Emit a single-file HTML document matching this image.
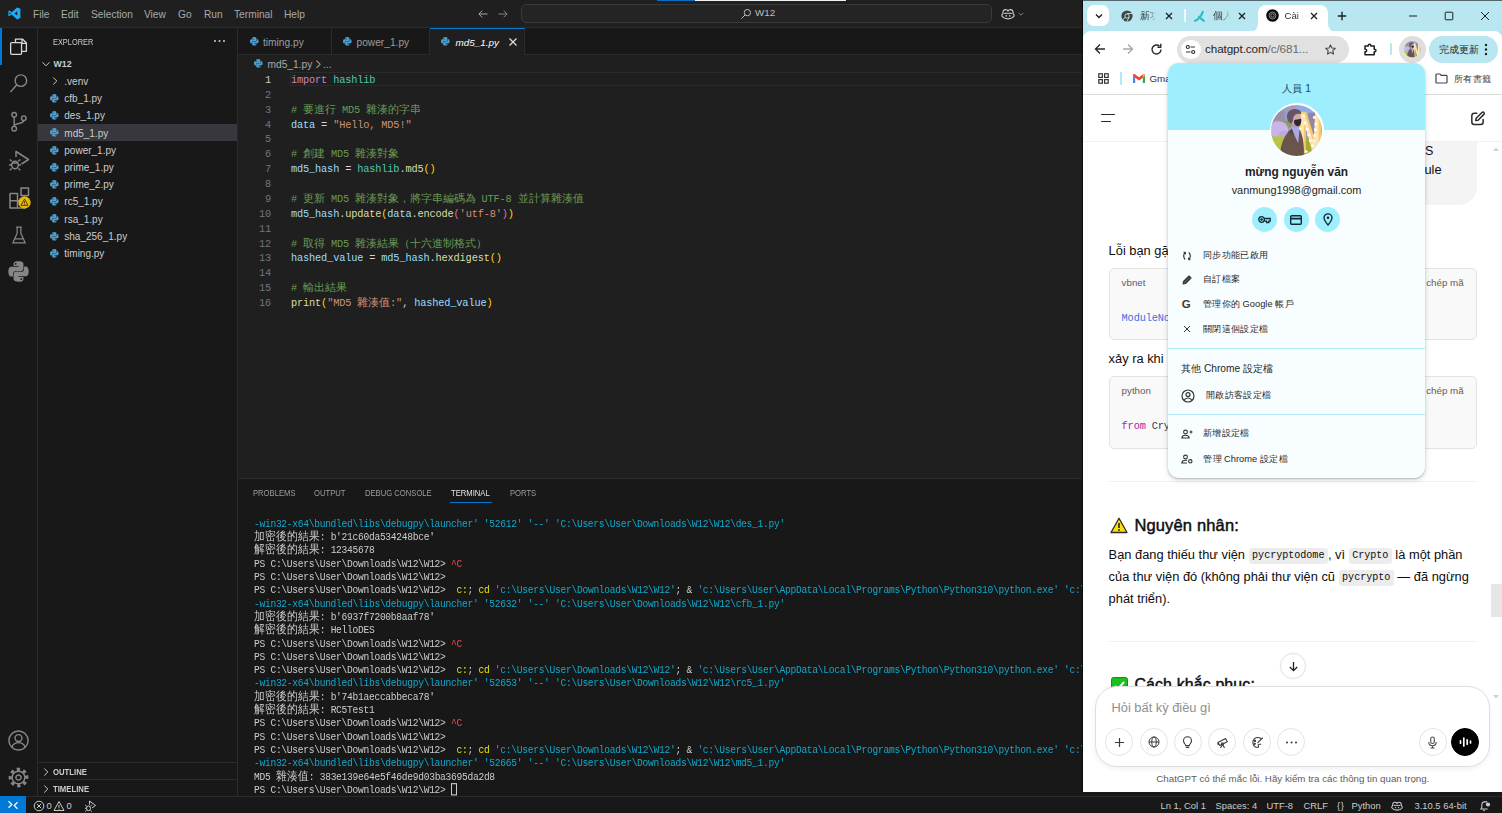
<!DOCTYPE html>
<html lang="zh-Hant">
<head>
<meta charset="utf-8">
<title>md5_1.py - W12 - Visual Studio Code</title>
<style>
*{box-sizing:border-box;margin:0;padding:0}
html,body{width:1502px;height:813px;overflow:hidden;background:#1f1f1f}
body{position:relative;font-family:"Liberation Sans",sans-serif;font-size:10.2px;color:#ccc;line-height:1}
.abs{position:absolute}
svg{display:block;overflow:visible}
/* ---------- VS Code ---------- */
#titlebar{left:0;top:0;width:1502px;height:28px;background:#1f1f1f;border-bottom:1px solid #2b2b2b}
#titlebar .m{position:absolute;top:9.7px;font-size:10.2px;color:#a9a9a9;white-space:nowrap}
#search{left:521px;top:4px;width:471px;height:19px;background:#242424;border:1px solid #3a3a3a;border-radius:5px}
#actbar{left:0;top:28px;width:38px;height:768px;background:#181818;border-right:1px solid #2b2b2b}
#sidebar{left:38px;top:28px;width:200px;height:768px;background:#181818;border-right:1px solid #2b2b2b}
.row{position:absolute;left:0;width:199px;height:17.2px;white-space:nowrap}
.row .t{position:absolute;left:26.3px;top:5.1px;font-size:10px;color:#ccc}
.row .pi{position:absolute;left:11px;top:3.8px}
.sechdr{position:absolute;left:0;width:199px;height:17.2px;border-top:1px solid #2b2b2b}
.sechdr b{position:absolute;left:15px;top:5px;font-size:8.6px;color:#ccc;transform:scaleX(.9);transform-origin:0 0}
#tabs{left:238px;top:28px;width:1264px;height:27px;background:#181818;border-bottom:1px solid #2b2b2b}
.tab{position:absolute;top:0;height:27px;border-right:1px solid #2b2b2b;white-space:nowrap}
.tab .t{position:absolute;top:10px;font-size:10.2px;color:#9d9d9d}
.tab .pi{position:absolute;top:8.4px}
#crumbs{left:238px;top:55px;width:1264px;height:17px;background:#1f1f1f;color:#a9a9a9;white-space:nowrap}
#code{left:238px;top:71.6px;width:1264px;height:407px;background:#1f1f1f}
.ln{position:absolute;left:0;width:1264px;height:14.87px;white-space:pre}
.ln i{position:absolute;left:0;width:33px;top:3.4px;text-align:right;font-style:normal;font-family:"Liberation Mono",monospace;font-size:10.3px;letter-spacing:-0.16px;color:#6e7681}
.ln code{position:absolute;left:53px;top:3.4px;font-family:"Liberation Mono",monospace;font-size:10.3px;letter-spacing:-0.16px;color:#ccc;white-space:pre}
.cj{display:inline-block;vertical-align:top;overflow:visible;white-space:nowrap;text-align:justify;text-align-last:justify;text-justify:inter-character;letter-spacing:0;font-family:"Liberation Sans",sans-serif;font-size:10.95px;line-height:11px}
.ln code.c-cm{color:#6a9955}
.ln .cj{position:relative;top:-.9px}
.cjx{display:inline-block;vertical-align:top;white-space:nowrap;overflow:visible;text-align:justify;text-align-last:justify;text-justify:inter-character;letter-spacing:0}
.c-cm{color:#6a9955}.c-kw{color:#c586c0}.c-mod{color:#4ec9b0}.c-var{color:#9cdcfe}.c-str{color:#ce9178}.c-fn{color:#dcdcaa}.c-b1{color:#ffd700}.c-b2{color:#da70d6}.c-op{color:#d4d4d4}
#panel{left:238px;top:478px;width:1264px;height:318px;background:#181818;border-top:1px solid #2b2b2b}
#panel .pt{position:absolute;top:9px;font-size:8.6px;color:#9d9d9d;white-space:nowrap;transform:scaleX(.89);transform-origin:0 0}
.tl{position:absolute;left:16px;height:13.3px;line-height:13.3px;transform:scaleY(1.12);transform-origin:0 55%;font-family:"Liberation Mono",monospace;font-size:9.6px;letter-spacing:-0.284px;color:#ccc;white-space:pre}
.t-cy{color:#11a8cd}.t-ye{color:#e5e510}.t-re{color:#f14c4c}
#status{left:0;top:796px;width:1502px;height:17px;background:#181818;border-top:1px solid #2b2b2b}
#status .s{position:absolute;top:3.7px;font-size:9.4px;color:#ccc;white-space:nowrap}
</style>
</head>
<body>

<svg width="0" height="0" style="position:absolute">
  <defs>
    <symbol id="py" viewBox="0 0 32 32"><path d="M15.9 3c-6.600 0-6.200 2.900-6.200 2.900v3h6.300v.9H7.200S3 9.300 3 16s3.700 6.400 3.700 6.400h2.200v-3.100s-.1-3.700 3.600-3.700h6.300s3.500.1 3.500-3.400V6.500S22.800 3 15.900 3zm-3.500 2a1.100 1.100 0 110 2.300 1.100 1.100 0 010-2.300z"/><path d="M16.100 29c6.600 0 6.200-2.900 6.200-2.900v-3H16v-.9h8.800S29 22.700 29 16s-3.700-6.400-3.700-6.400h-2.200v3.100s.1 3.700-3.600 3.700h-6.300s-3.500-.1-3.500 3.400v5.700S9.200 29 16.100 29zm3.500-2a1.100 1.100 0 110-2.300 1.100 1.100 0 010 2.300z"/></symbol>
    <symbol id="chev-r" viewBox="0 0 16 16"><path d="M5.700 3.300 10.400 8l-4.700 4.700" fill="none" stroke="currentColor" stroke-width="1.300"/></symbol>
    <symbol id="chev-d" viewBox="0 0 16 16"><path d="M3.300 5.700 8 10.400l4.700-4.700" fill="none" stroke="currentColor" stroke-width="1.300"/></symbol>
    <symbol id="avatar" viewBox="0 0 52 52">
      <clipPath id="avc"><circle cx="26" cy="26" r="26"/></clipPath>
      <filter id="avb" x="-10%" y="-10%" width="120%" height="120%"><feGaussianBlur stdDeviation=".55"/></filter>
      <g clip-path="url(#avc)"><g filter="url(#avb)">
        <rect x="-3" y="-3" width="58" height="58" fill="#aa9cb8"/>
        <rect x="14" y="-2" width="3" height="20" fill="#8ea0d6"/>
        <rect x="25" y="-2" width="18" height="12" fill="#93a9e2"/>
        <rect x="2" y="6" width="12" height="10" fill="#9c90a8"/>
        <rect x="38" y="8" width="16" height="26" fill="#8f86a6"/>
        <rect x="9" y="16" width="12" height="7" fill="#8f9a6c"/>
        <ellipse cx="8" cy="25" rx="9.500" ry="8.500" fill="#c9b6e8"/>
        <ellipse cx="13" cy="30" rx="5" ry="4" fill="#bda8e0"/>
        <path d="M-2 32h16v24H-2z" fill="#b9c446"/>
        <path d="M30 34h26v22H30z" fill="#a4ac38"/>
        <path d="M28.500 7h7.500l8.500 27 .5-26h6.500v32l-3 9h-6.500L35.500 22v27h-6z" fill="#f4c877"/>
        <path d="M30.500 8.500h3.500l9.500 30 1.500-29h3.500v30l-2 7h-4L33.500 17v30.500h-2.500z" fill="#fbe3b4"/>
        <g fill="#fffdf2"><circle cx="33.300" cy="11.500" r="1.500"/><circle cx="34.700" cy="18.300" r="1.500"/><circle cx="29.700" cy="24" r="1.400"/><circle cx="36.700" cy="24.800" r="1.500"/><circle cx="38.500" cy="30.500" r="1.500"/><circle cx="40" cy="36.500" r="1.500"/><circle cx="42.300" cy="41.500" r="1.500"/><circle cx="31.300" cy="41.300" r="1.400"/><circle cx="36" cy="47.500" r="1.400"/><circle cx="44.200" cy="12.800" r="1.500"/><circle cx="45.800" cy="19.300" r="1.500"/><circle cx="45.200" cy="25.300" r="1.500"/><circle cx="44.500" cy="31" r="1.500"/><circle cx="43.500" cy="36.500" r="1.400"/></g>
        <path d="M9 52c.5-10 3.500-19 8.500-24.500l6.500-5.500 5 3c3 5 5 13.500 4.500 27z" fill="#6a544c"/>
        <path d="M17.500 27.500 24 22l2 10z" fill="#5a463f"/>
        <path d="M20.500 21.800l6.800.7 1.700 3.500-1.200 13-3.600-7.500z" fill="#aba7e0"/>
        <ellipse cx="25.600" cy="14.300" rx="4.800" ry="6.900" fill="#cba9a7"/>
        <path d="M16.500 13.500c-1.200-5.500 2.800-9.500 8-9.300 4.200.2 6.700 2.300 6.300 5.300-2.300-1-4.800-.6-6.400.8-1.300 1.300-2 3.300-2 5.600l-1.300 3.200c-2.600-.6-4.100-2.600-4.600-5.600z" fill="#6b5266"/>
        <path d="M23.700 15.200 30.800 14c.4 3.600-.5 6.600-2.600 7.700-2.600.2-4.100-1.300-4.700-3.500z" fill="#2c2830"/>
      </g></g>
    </symbol>
  </defs>
</svg>

<!-- ======================= VS CODE ======================= -->
<div id="titlebar" class="abs">
  <svg class="abs" style="left:7.800px;top:7.300px" width="12.800" height="12.800" viewBox="0 0 100 100"><path fill="#23a9f2" d="M71 3 29 42 11 28 3 32v36l8 4 18-14 42 39 26-11V14zM12 60V40l11 10zm38-10 22-17v34z"/></svg>
  <span class="m" style="left:33px">File</span>
  <span class="m" style="left:61px">Edit</span>
  <span class="m" style="left:91px">Selection</span>
  <span class="m" style="left:144px">View</span>
  <span class="m" style="left:178px">Go</span>
  <span class="m" style="left:204px">Run</span>
  <span class="m" style="left:234px">Terminal</span>
  <span class="m" style="left:284px">Help</span>
  <div class="abs" style="left:657px;top:0;width:38px;height:1px;background:#0a6fc4"></div>
  <div class="abs" style="left:695px;top:0;width:151px;height:1px;background:#f2f2f2"></div>
  <svg class="abs" style="left:477px;top:8px" width="12" height="12" viewBox="0 0 16 16"><path d="M14 8H2.500M7 3.500 2.500 8 7 12.500" fill="none" stroke="#b4b4b4" stroke-width="1.200"/></svg>
  <svg class="abs" style="left:497px;top:8px" width="12" height="12" viewBox="0 0 16 16"><path d="M2 8h11.500M9 3.500 13.500 8 9 12.500" fill="none" stroke="#8a8a8a" stroke-width="1.200"/></svg>
  <div id="search" class="abs"></div>
  <svg class="abs" style="left:740px;top:7.500px" width="12" height="12" viewBox="0 0 16 16"><circle cx="9.800" cy="6.200" r="4.200" fill="none" stroke="#bdbdbd" stroke-width="1.300"/><path d="M6.800 9.200 1.800 14.200" stroke="#bdbdbd" stroke-width="1.300"/></svg>
  <span class="m" style="left:755px;top:8.400px;font-size:9.800px;color:#bdbdbd">W12</span>
  <svg class="abs" style="left:1001px;top:6.500px" width="14" height="14" viewBox="0 0 16 16"><path d="M2.200 7.500C2 4.500 3 3 5.200 3c1.500 0 2.300.6 2.800 1.500C8.500 3.600 9.300 3 10.800 3c2.200 0 3.200 1.500 3 4.500 1 .8 1.200 1.500 1.200 2.800-1.500 2.200-4 3.200-7 3.200s-5.500-1-7-3.200c0-1.300.2-2 1.200-2.800z" fill="none" stroke="#ccc" stroke-width="1.300"/><path d="M6 9.200v1.800M10 9.200v1.800" stroke="#ccc" stroke-width="1.400"/><path d="M3.500 7.200h9" stroke="#ccc" stroke-width="1.200"/></svg>
  <svg class="abs" style="left:1017px;top:9.500px" width="8" height="8" viewBox="0 0 16 16"><use href="#chev-d" color="#b0b0b0"/></svg>
</div>

<div id="actbar" class="abs">
  <div class="abs" style="left:0;top:0;width:2px;height:37px;background:#0078d4"></div>
  <!-- explorer -->
  <svg class="abs" style="left:8.300px;top:8px" width="21" height="21" viewBox="0 0 24 24" fill="none" stroke="#d7d7d7" stroke-width="1.500" stroke-linejoin="round"><path d="M8.500 7V3.500h8l4.500 4.500v9.500h-5.500"/><path d="M16 3.500V8.500h5"/><rect x="3" y="7.500" width="12.500" height="13.500" rx="1.200"/></svg>
  <!-- search -->
  <svg class="abs" style="left:7px;top:43.5px" width="23" height="23" viewBox="0 0 24 24" fill="none" stroke="#868686" stroke-width="1.500"><circle cx="14.500" cy="9" r="6"/><path d="M10.300 13.300 3.500 21"/></svg>
  <!-- scm -->
  <svg class="abs" style="left:7px;top:81.5px" width="23" height="23" viewBox="0 0 24 24" fill="none" stroke="#868686" stroke-width="1.500"><circle cx="7.500" cy="5" r="2.400"/><circle cx="7.500" cy="19.500" r="2.400"/><circle cx="17.500" cy="8.500" r="2.400"/><path d="M7.500 7.400v9.700M17.500 10.900c0 4-10 2.500-10 6.200"/></svg>
  <!-- debug -->
  <svg class="abs" style="left:7px;top:119.5px" width="24" height="24" viewBox="0 0 24 24" fill="none" stroke="#868686" stroke-width="1.500" stroke-linejoin="round"><path d="M9 9V3.500l12.500 8-7 4.500"/><ellipse cx="8" cy="17" rx="3.300" ry="3.800"/><path d="M4.700 13.200l-2-1.700M11.300 13.200l2-1.700M4.700 17H2M14 17h-2.700M4.700 20.500l-2 1.700M11.300 20.500l2 1.700M5 15h6"/></svg>
  <!-- extensions -->
  <svg class="abs" style="left:6.5px;top:157px" width="24" height="24" viewBox="0 0 24 24" fill="none" stroke="#868686" stroke-width="1.500" stroke-linejoin="round"><path d="M3 8.500h7.500V23H3zM3 15.700h14.500V23H10.500v-7.300M14 3h7.500v7.500H14z"/></svg>
  <svg class="abs" style="left:17.500px;top:168px" width="13" height="13" viewBox="0 0 16 16"><circle cx="8" cy="8" r="7.600" fill="#e6b80e"/><path d="M8 3.800 12.300 11.500H3.700z" fill="none" stroke="#3a2f00" stroke-width="1.100" stroke-linejoin="round"/><path d="M8 6.500v2.600M8 9.800v.9" stroke="#3a2f00" stroke-width="1"/></svg>
  <!-- flask -->
  <svg class="abs" style="left:9px;top:196.500px" width="20" height="20" viewBox="0 0 24 24" fill="none" stroke="#868686" stroke-width="1.500" stroke-linejoin="round"><path d="M8.500 2.500h7M9.800 2.500v7.500L4.500 21.500h15L14.200 10V2.500M7 16.500h10"/></svg>
  <!-- python -->
  <svg class="abs" style="left:6px;top:230.5px" width="25" height="25" viewBox="0 0 32 32" fill="#868686"><use href="#py"/></svg>
  <!-- account -->
  <svg class="abs" style="left:7px;top:700.5px" width="23" height="23" viewBox="0 0 24 24" fill="none" stroke="#868686" stroke-width="1.500"><circle cx="12" cy="12" r="10"/><circle cx="12" cy="9.500" r="3.600"/><path d="M5 19c1.300-3.200 3.800-4.800 7-4.800s5.700 1.600 7 4.800"/></svg>
  <!-- gear -->
  <svg class="abs" style="left:7px;top:737.5px" width="23" height="23" viewBox="-12 -12 24 24" fill="none" stroke="#868686"><circle r="8.600" stroke-width="3.400" stroke-dasharray="3.380 3.375" transform="rotate(-14)"/><circle r="6.600" stroke-width="1.500"/><circle r="2.700" stroke-width="1.500"/></svg>
</div>

<div id="sidebar" class="abs">
  <span class="abs" style="left:15px;top:9.800px;font-size:8.600px;color:#ccc;transform:scaleX(.86);transform-origin:0 0">EXPLORER</span>
  <svg class="abs" style="left:175px;top:11px" width="13" height="4" viewBox="0 0 13 4"><circle cx="2" cy="2" r="1" fill="#ccc"/><circle cx="6.500" cy="2" r="1" fill="#ccc"/><circle cx="11" cy="2" r="1" fill="#ccc"/></svg>
  <div class="row" style="top:26.800px"><svg class="abs" style="left:2px;top:3px" width="12" height="12"><use href="#chev-d" color="#ccc"/></svg><b class="abs" style="left:15.500px;top:4.900px;font-size:8.800px;color:#ccc">W12</b></div>
  <div class="row" style="top:44px"><svg class="abs" style="left:11px;top:3px" width="12" height="12"><use href="#chev-r" color="#ccc"/></svg><span class="t">.venv</span></div>
  <div class="row" style="top:61.200px"><svg class="pi" width="10.600" height="10.600" fill="#4f9fcf"><use href="#py"/></svg><span class="t">cfb_1.py</span></div>
  <div class="row" style="top:78.400px"><svg class="pi" width="10.600" height="10.600" fill="#4f9fcf"><use href="#py"/></svg><span class="t">des_1.py</span></div>
  <div class="row" style="top:95.600px;background:#37373d"><svg class="pi" width="10.600" height="10.600" fill="#4f9fcf"><use href="#py"/></svg><span class="t">md5_1.py</span></div>
  <div class="row" style="top:112.800px"><svg class="pi" width="10.600" height="10.600" fill="#4f9fcf"><use href="#py"/></svg><span class="t">power_1.py</span></div>
  <div class="row" style="top:130px"><svg class="pi" width="10.600" height="10.600" fill="#4f9fcf"><use href="#py"/></svg><span class="t">prime_1.py</span></div>
  <div class="row" style="top:147.200px"><svg class="pi" width="10.600" height="10.600" fill="#4f9fcf"><use href="#py"/></svg><span class="t">prime_2.py</span></div>
  <div class="row" style="top:164.400px"><svg class="pi" width="10.600" height="10.600" fill="#4f9fcf"><use href="#py"/></svg><span class="t">rc5_1.py</span></div>
  <div class="row" style="top:181.600px"><svg class="pi" width="10.600" height="10.600" fill="#4f9fcf"><use href="#py"/></svg><span class="t">rsa_1.py</span></div>
  <div class="row" style="top:198.800px"><svg class="pi" width="10.600" height="10.600" fill="#4f9fcf"><use href="#py"/></svg><span class="t">sha_256_1.py</span></div>
  <div class="row" style="top:216px"><svg class="pi" width="10.600" height="10.600" fill="#4f9fcf"><use href="#py"/></svg><span class="t">timing.py</span></div>
  <div class="sechdr" style="top:734px"><svg class="abs" style="left:2px;top:2.500px" width="12" height="12"><use href="#chev-r" color="#ccc"/></svg><b>OUTLINE</b></div>
  <div class="sechdr" style="top:751.200px"><svg class="abs" style="left:2px;top:2.500px" width="12" height="12"><use href="#chev-r" color="#ccc"/></svg><b>TIMELINE</b></div>
</div>

<div id="tabs" class="abs">
  <div class="tab" style="left:0;width:93.500px"><svg class="pi" style="left:11px" width="10.600" height="10.600" fill="#4f9fcf"><use href="#py"/></svg><span class="t" style="left:25px">timing.py</span></div>
  <div class="tab" style="left:93.500px;width:98.500px"><svg class="pi" style="left:10.500px" width="10.600" height="10.600" fill="#4f9fcf"><use href="#py"/></svg><span class="t" style="left:25px">power_1.py</span></div>
  <div class="tab" style="left:192px;width:95px;height:28px;background:#1f1f1f;border-top:1px solid #0078d4"><svg class="pi" style="left:10px;top:7.400px" width="10.600" height="10.600" fill="#4f9fcf"><use href="#py"/></svg><span class="t" style="left:25.500px;top:9px;color:#fff;font-style:italic;font-size:9.900px">md5_1.py</span><svg class="abs" style="left:78px;top:8px" width="10" height="10" viewBox="0 0 10 10"><path d="M1.500 1.500l7 7M8.500 1.500l-7 7" stroke="#e0e0e0" stroke-width="1.200"/></svg></div>
</div>

<div id="crumbs" class="abs">
  <svg class="abs" style="left:15px;top:2.800px" width="10.600" height="10.600" fill="#4f9fcf"><use href="#py"/></svg>
  <span class="abs" style="left:29.500px;top:4.600px;font-size:10.200px">md5_1.py</span>
  <svg class="abs" style="left:73.500px;top:2.500px" width="12.500" height="12.500"><use href="#chev-r" color="#a9a9a9"/></svg>
  <span class="abs" style="left:85px;top:4.600px;font-size:10.200px">...</span>
</div>

<div id="code" class="abs">
  <div class="abs" style="left:52px;top:0;width:1212px;height:14.870px;border:1px solid #2a2a2a"></div>
  <div class="ln" style="top:0"><i style="color:#ccc">1</i><code><span class="c-kw">import</span> <span class="c-mod">hashlib</span></code></div>
  <div class="ln" style="top:14.870px"><i>2</i></div>
  <div class="ln" style="top:29.740px"><i>3</i><code class="c-cm"># <span class="cj" style="width:32.850px">要進行</span> MD5 <span class="cj" style="width:54.750px">雜湊的字串</span></code></div>
  <div class="ln" style="top:44.610px"><i>4</i><code><span class="c-var">data</span> <span class="c-op">=</span> <span class="c-str">"Hello, MD5!"</span></code></div>
  <div class="ln" style="top:59.480px"><i>5</i></div>
  <div class="ln" style="top:74.350px"><i>6</i><code class="c-cm"># <span class="cj" style="width:21.900px">創建</span> MD5 <span class="cj" style="width:43.800px">雜湊對象</span></code></div>
  <div class="ln" style="top:89.220px"><i>7</i><code><span class="c-var">md5_hash</span> <span class="c-op">=</span> <span class="c-mod">hashlib</span><span class="c-op">.</span><span class="c-fn">md5</span><span class="c-b1">()</span></code></div>
  <div class="ln" style="top:104.090px"><i>8</i></div>
  <div class="ln" style="top:118.960px"><i>9</i><code class="c-cm"># <span class="cj" style="width:21.900px">更新</span> MD5 <span class="cj" style="width:120.450px">雜湊對象，將字串編碼為</span> UTF-8 <span class="cj" style="width:65.700px">並計算雜湊值</span></code></div>
  <div class="ln" style="top:133.830px"><i>10</i><code><span class="c-var">md5_hash</span><span class="c-op">.</span><span class="c-fn">update</span><span class="c-b1">(</span><span class="c-var">data</span><span class="c-op">.</span><span class="c-fn">encode</span><span class="c-b2">(</span><span class="c-str">'utf-8'</span><span class="c-b2">)</span><span class="c-b1">)</span></code></div>
  <div class="ln" style="top:148.700px"><i>11</i></div>
  <div class="ln" style="top:163.570px"><i>12</i><code class="c-cm"># <span class="cj" style="width:21.900px">取得</span> MD5 <span class="cj" style="width:131.400px">雜湊結果（十六進制格式）</span></code></div>
  <div class="ln" style="top:178.440px"><i>13</i><code><span class="c-var">hashed_value</span> <span class="c-op">=</span> <span class="c-var">md5_hash</span><span class="c-op">.</span><span class="c-fn">hexdigest</span><span class="c-b1">()</span></code></div>
  <div class="ln" style="top:193.310px"><i>14</i></div>
  <div class="ln" style="top:208.180px"><i>15</i><code class="c-cm"># <span class="cj" style="width:43.800px">輸出結果</span></code></div>
  <div class="ln" style="top:223.050px"><i>16</i><code><span class="c-fn">print</span><span class="c-b1">(</span><span class="c-str">"MD5 <span class="cj" style="width:32.850px">雜湊值</span>:"</span><span class="c-op">,</span> <span class="c-var">hashed_value</span><span class="c-b1">)</span></code></div>
</div>

<div id="panel" class="abs">
<div class="abs" style="left:0;top:1px;width:1264px;height:316px">
  <span class="pt" style="left:15px">PROBLEMS</span>
  <span class="pt" style="left:76px">OUTPUT</span>
  <span class="pt" style="left:127px">DEBUG CONSOLE</span>
  <span class="pt" style="left:213px;color:#e7e7e7">TERMINAL</span>
  <div class="abs" style="left:212px;top:21.500px;width:42px;height:1px;background:#0078d4"></div>
  <span class="pt" style="left:272px">PORTS</span>

  <div class="tl t-cy" style="top:37.85px">-win32-x64\bundled\libs\debugpy\launcher' '52612' '--' 'C:\Users\User\Downloads\W12\W12\des_1.py'</div>
  <div class="tl" style="top:51.15px"><span class="cj" style="width:65.700px">加密後的結果</span>: b'21c60da534248bce'</div>
  <div class="tl" style="top:64.45px"><span class="cj" style="width:65.700px">解密後的結果</span>: 12345678</div>
  <div class="tl" style="top:77.75px">PS C:\Users\User\Downloads\W12\W12> <span class="t-re">^C</span></div>
  <div class="tl" style="top:91.05px">PS C:\Users\User\Downloads\W12\W12></div>
  <div class="tl" style="top:104.35px">PS C:\Users\User\Downloads\W12\W12>  <span class="t-ye">c:</span>; <span class="t-ye">cd</span> <span class="t-cy">'c:\Users\User\Downloads\W12\W12'</span>; &amp; <span class="t-cy">'c:\Users\User\AppData\Local\Programs\Python\Python310\python.exe' 'c:\Users</span></div>
  <div class="tl t-cy" style="top:117.65px">-win32-x64\bundled\libs\debugpy\launcher' '52632' '--' 'C:\Users\User\Downloads\W12\W12\cfb_1.py'</div>
  <div class="tl" style="top:130.95px"><span class="cj" style="width:65.700px">加密後的結果</span>: b'6937f7200b8aaf78'</div>
  <div class="tl" style="top:144.25px"><span class="cj" style="width:65.700px">解密後的結果</span>: HelloDES</div>
  <div class="tl" style="top:157.55px">PS C:\Users\User\Downloads\W12\W12> <span class="t-re">^C</span></div>
  <div class="tl" style="top:170.85px">PS C:\Users\User\Downloads\W12\W12></div>
  <div class="tl" style="top:184.15px">PS C:\Users\User\Downloads\W12\W12>  <span class="t-ye">c:</span>; <span class="t-ye">cd</span> <span class="t-cy">'c:\Users\User\Downloads\W12\W12'</span>; &amp; <span class="t-cy">'c:\Users\User\AppData\Local\Programs\Python\Python310\python.exe' 'c:\Users</span></div>
  <div class="tl t-cy" style="top:197.45px">-win32-x64\bundled\libs\debugpy\launcher' '52653' '--' 'C:\Users\User\Downloads\W12\W12\rc5_1.py'</div>
  <div class="tl" style="top:210.75px"><span class="cj" style="width:65.700px">加密後的結果</span>: b'74b1aeccabbeca78'</div>
  <div class="tl" style="top:224.05px"><span class="cj" style="width:65.700px">解密後的結果</span>: RC5Test1</div>
  <div class="tl" style="top:237.35px">PS C:\Users\User\Downloads\W12\W12> <span class="t-re">^C</span></div>
  <div class="tl" style="top:250.65px">PS C:\Users\User\Downloads\W12\W12></div>
  <div class="tl" style="top:263.95px">PS C:\Users\User\Downloads\W12\W12>  <span class="t-ye">c:</span>; <span class="t-ye">cd</span> <span class="t-cy">'c:\Users\User\Downloads\W12\W12'</span>; &amp; <span class="t-cy">'c:\Users\User\AppData\Local\Programs\Python\Python310\python.exe' 'c:\Users</span></div>
  <div class="tl t-cy" style="top:277.25px">-win32-x64\bundled\libs\debugpy\launcher' '52665' '--' 'C:\Users\User\Downloads\W12\W12\md5_1.py'</div>
  <div class="tl" style="top:290.55px">MD5 <span class="cj" style="width:32.850px">雜湊值</span>: 383e139e64e5f46de9d03ba3695da2d8</div>
  <div class="tl" style="top:303.85px">PS C:\Users\User\Downloads\W12\W12> <span style="display:inline-block;vertical-align:top;width:5.500px;height:11px;margin-top:.3px;border:1px solid #ccc"></span></div>
</div>
</div>

<div id="status" class="abs">
  <div class="abs" style="left:0;top:-1px;width:26px;height:18px;background:#0078d4"></div>
  <svg class="abs" style="left:7px;top:3px" width="12" height="11" viewBox="0 0 12 11"><path d="M1.500 1.800 4.800 5 1.500 8.200M10.500 2.800 7.200 6l3.300 3.200" fill="none" stroke="#fff" stroke-width="1.200" transform="translate(0,-.5)"/></svg>
  <svg class="abs" style="left:33px;top:2.500px" width="12" height="12" viewBox="0 0 12 12"><circle cx="6" cy="6" r="4.800" fill="none" stroke="#ccc"/><path d="M4 4l4 4M8 4l-4 4" stroke="#ccc"/></svg>
  <span class="s" style="left:46.500px">0</span>
  <svg class="abs" style="left:53px;top:2.500px" width="12" height="12" viewBox="0 0 12 12"><path d="M6 1.500 11 10.500H1z" fill="none" stroke="#ccc" stroke-linejoin="round"/><path d="M6 5v2.800M6 8.600v.9" stroke="#ccc"/></svg>
  <span class="s" style="left:66.500px">0</span>
  <svg class="abs" style="left:84px;top:2px" width="13" height="13" viewBox="0 0 13 13" fill="none" stroke="#ccc" stroke-linejoin="round"><path d="M5.500 5.500V2l6 4.500L8 9"/><ellipse cx="4.500" cy="9.300" rx="2" ry="2.400"/><path d="M2.500 7l-1.300-1M6.500 7l1.300-1M2.500 9.300H1M2.500 11.500l-1.300 1M6.500 11.500l1.300 1"/></svg>

  <span class="s" style="left:1160.500px">Ln 1, Col 1</span>
  <span class="s" style="left:1215.500px">Spaces: 4</span>
  <span class="s" style="left:1266.500px">UTF-8</span>
  <span class="s" style="left:1303.500px">CRLF</span>
  <span class="s" style="left:1337px;letter-spacing:.5px">{}</span>
  <span class="s" style="left:1351.500px">Python</span>
  <svg class="abs" style="left:1391px;top:2.500px" width="12" height="12" viewBox="0 0 16 16"><path d="M2.200 7.500C2 4.500 3 3 5.200 3c1.500 0 2.300.6 2.800 1.500C8.500 3.600 9.300 3 10.800 3c2.200 0 3.200 1.500 3 4.500 1 .8 1.200 1.500 1.200 2.800-1.500 2.200-4 3.200-7 3.200s-5.500-1-7-3.200c0-1.300.2-2 1.200-2.800z" fill="none" stroke="#ccc" stroke-width="1.400"/><path d="M6 9.200v1.800M10 9.200v1.800" stroke="#ccc" stroke-width="1.500"/><path d="M3.500 7.200h9" stroke="#ccc" stroke-width="1.300"/></svg>
  <span class="s" style="left:1414.500px">3.10.5 64-bit</span>
  <svg class="abs" style="left:1479px;top:2.500px" width="12" height="12" viewBox="0 0 16 16" fill="none" stroke="#ccc" stroke-width="1.400"><path d="M11 2.500H7C5 2.500 3.800 4 3.800 6v3.500L2.500 12h9"/><path d="M6 12.500c0 1.200.8 1.800 1.800 1.800"/><circle cx="12" cy="6" r="2.800" fill="#ccc" stroke="none"/></svg>
</div>

<!-- ======================= CHROME ======================= -->
<style>
#chrome{left:1083px;top:0;width:419px;height:792px;background:#fff;overflow:hidden;color:#1f1f1f}
#chrome .x{position:absolute}
.ctab{position:absolute;top:11px;font-size:9.600px;color:#333;white-space:nowrap;overflow:hidden}
.pg{position:absolute;white-space:nowrap;color:#0d0d0d;font-size:12.850px}
.ic{display:inline;position:relative;top:-.3px;background:#ececec;border-radius:3px;font-family:"Liberation Mono",monospace;font-size:10.100px;letter-spacing:-0.030px;padding:2.450px 3.500px 2.450px;color:#0d0d0d}
.cb{position:absolute;left:25.600px;width:368px;height:72.800px;background:#f9f9f9;border:1px solid #e3e3e3;border-radius:5px}
.cb .l{position:absolute;left:12px;top:9.300px;font-size:9.750px;color:#5d5d5d}
.cb .r{position:absolute;right:12px;top:9.300px;font-size:9.750px;color:#5d5d5d}
.cb .c{position:absolute;left:12px;top:44.300px;font-family:"Liberation Mono",monospace;font-size:10.300px;letter-spacing:-0.160px;white-space:pre;color:#383a42}
.hd{font-weight:normal;-webkit-text-stroke:.45px #0d0d0d;letter-spacing:.15px}
.rb{position:absolute;width:28px;height:28px;margin:-.5px 0 0 -.5px;border-radius:50%;border:1px solid #e3e3e3;background:#fff}
</style>
<div class="abs" style="left:1082px;top:0;width:1px;height:792px;background:#0a0a0a"></div>
<div id="chrome" class="abs">
  <!-- frame / tab strip -->
  <div class="x" style="left:0;top:0;width:419px;height:46px;background:#b8e7f2;border-top:1px solid #55666c"></div>
  <div class="x" style="left:4.300px;top:4.700px;width:21.800px;height:21.600px;border-radius:7px;background:#fff"></div>
  <svg class="x" style="left:10.500px;top:11px" width="10" height="10" viewBox="0 0 10 10"><path d="M2 3.500 5 6.500 8 3.500" fill="none" stroke="#1f1f1f" stroke-width="1.400"/></svg>
  <!-- tab 1 -->
  <svg class="x" style="left:38px;top:9.500px" width="12" height="12" viewBox="-6 -6 12 12"><circle r="5.600" fill="#444"/><circle r="2.500" fill="#b8e7f2"/><circle r="1.700" fill="#444"/><path d="M0-2.500H5.200M-2.200 1.300-4.800 5.200M2.200 1.300-.3 5.600" stroke="#b8e7f2" stroke-width=".9"/></svg>
  <span class="ctab" style="left:56.500px;width:16px;-webkit-mask-image:linear-gradient(90deg,#000 50%,transparent)">新功能</span>
  <svg class="x" style="left:82px;top:11.500px" width="8" height="8" viewBox="0 0 8 8"><path d="M1 1l6 6M7 1 1 7" stroke="#1f1f1f" stroke-width="1.300"/></svg>
  <div class="x" style="left:101px;top:9px;width:1.500px;height:13px;background:#eefafd"></div>
  <!-- tab 2 -->
  <svg class="x" style="left:110px;top:9.500px" width="13" height="13" viewBox="0 0 13 13" fill="none" stroke="#2cc0c8" stroke-width="2.200" stroke-linecap="round"><path d="M2 10.800C5 10 8.500 6 9.800 1.800"/><path d="M6 6.800 10.800 10.800"/></svg>
  <span class="ctab" style="left:129.500px;width:17px;-webkit-mask-image:linear-gradient(90deg,#000 55%,transparent)">個人資</span>
  <svg class="x" style="left:155px;top:11.500px" width="8" height="8" viewBox="0 0 8 8"><path d="M1 1l6 6M7 1 1 7" stroke="#1f1f1f" stroke-width="1.300"/></svg>
  <!-- active tab -->
  <div class="x" style="left:175px;top:5px;width:70px;height:27px;background:#fff;border-radius:8px 8px 0 0"></div>
  <svg class="x" style="left:167px;top:24px" width="8" height="8" viewBox="0 0 8 8"><path d="M8 0v8H0A8 8 0 0 0 8 0z" fill="#fff"/></svg>
  <svg class="x" style="left:245px;top:24px" width="8" height="8" viewBox="0 0 8 8"><path d="M0 0v8h8A8 8 0 0 1 0 0z" fill="#fff"/></svg>
  <svg class="x" style="left:182.500px;top:9px" width="13" height="13" viewBox="-6.500 -6.500 13 13"><circle r="6.300" fill="#0a0a0a"/><circle r="3.400" fill="none" stroke="#bbb" stroke-width=".7"/><circle r="1.700" fill="none" stroke="#bbb" stroke-width=".7"/></svg>
  <span class="ctab" style="left:201.500px;width:18px;-webkit-mask-image:linear-gradient(90deg,#000 70%,transparent)">Cài đặt</span>
  <svg class="x" style="left:227px;top:11.500px" width="8" height="8" viewBox="0 0 8 8"><path d="M1 1l6 6M7 1 1 7" stroke="#1f1f1f" stroke-width="1.300"/></svg>
  <svg class="x" style="left:254px;top:11px" width="10" height="10" viewBox="0 0 10 10"><path d="M5 .8v8.400M.8 5h8.400" stroke="#1f1f1f" stroke-width="1.400"/></svg>
  <!-- window controls -->
  <svg class="x" style="left:325px;top:11px" width="10" height="10" viewBox="0 0 10 10"><path d="M1 5h8" stroke="#1f1f1f" stroke-width="1"/></svg>
  <svg class="x" style="left:361px;top:11px" width="10" height="10" viewBox="0 0 10 10"><rect x="1.200" y="1.200" width="7.600" height="7.600" rx=".8" fill="none" stroke="#1f1f1f" stroke-width="1"/></svg>
  <svg class="x" style="left:397px;top:11px" width="10" height="10" viewBox="0 0 10 10"><path d="M1 1l8 8M9 1 1 9" stroke="#1f1f1f" stroke-width="1"/></svg>

  <!-- toolbar -->
  <div class="x" style="left:0;top:31px;width:419px;height:64px;background:#fff;border-radius:8px 8px 0 0;border-bottom:1px solid #dadada"></div>
  <svg class="x" style="left:11px;top:43px" width="12" height="12" viewBox="0 0 12 12" fill="none" stroke="#2a2a2a" stroke-width="1.400"><path d="M11 6H1.800M6 1.500 1.500 6 6 10.500"/></svg>
  <svg class="x" style="left:39px;top:43px" width="12" height="12" viewBox="0 0 12 12" fill="none" stroke="#a6a6a6" stroke-width="1.300"><path d="M1 6h9.200M6 1.500 10.500 6 6 10.500"/></svg>
  <svg class="x" style="left:67px;top:42.500px" width="13" height="13" viewBox="0 0 13 13" fill="none" stroke="#2a2a2a" stroke-width="1.400"><path d="M11 6.500A4.500 4.500 0 1 1 9.500 3.100"/><path d="M10.800.8v3.400H7.400" stroke-linejoin="round"/></svg>
  <div class="x" style="left:94px;top:36px;width:172px;height:26.500px;border-radius:13.250px;background:#e1e1e1"></div>
  <div class="x" style="left:98px;top:39.500px;width:19.500px;height:19.500px;border-radius:50%;background:#fff"></div>
  <svg class="x" style="left:102px;top:44px" width="11" height="11" viewBox="0 0 11 11" fill="none" stroke="#333" stroke-width="1.200"><circle cx="2.800" cy="3" r="1.500"/><path d="M5.500 3H10M1 8h4.500"/><circle cx="8.200" cy="8" r="1.500"/></svg>
  <span class="x" style="left:122px;top:42.500px;font-size:11.700px;white-space:nowrap;color:#1f1f1f;letter-spacing:-.1px">chatgpt.com<span style="color:#6a6a6a">/c/681...</span></span>
  <svg class="x" style="left:240.500px;top:42.500px" width="13" height="13" viewBox="0 0 24 24"><path d="M12 3.500l2.700 5.600 6.100.8-4.500 4.200 1.100 6.100L12 17.300l-5.400 2.900 1.100-6.100L3.200 9.900l6.100-.8z" fill="none" stroke="#444" stroke-width="1.900" stroke-linejoin="round"/></svg>
  <svg class="x" style="left:280px;top:42px" width="14" height="14" viewBox="0 0 14 14"><path d="M2 4h3.200c-.5-2.300 3.100-2.300 2.600 0H11.200v3.200c2.300-.5 2.300 3.100 0 2.600V12.700H2V9.800c2.200.4 2.200-3 0-2.600z" fill="none" stroke="#1f1f1f" stroke-width="1.500" stroke-linejoin="round"/></svg>
  <div class="x" style="left:306.500px;top:43px;width:2px;height:12px;border-radius:1px;background:#b8e7f2"></div>
  <div class="x" style="left:316px;top:36px;width:26.500px;height:26.500px;border-radius:50%;background:#dedede"></div>
  <svg class="x" style="left:321px;top:41px" width="16.500" height="16.500" viewBox="0 0 52 52"><use href="#avatar"/></svg>
  <div class="x" style="left:346px;top:36px;width:69px;height:26.500px;border-radius:13.250px;background:#b8e7f2"></div>
  <span class="x" style="left:355.500px;top:44.500px;font-size:9.600px;white-space:nowrap;color:#1f1f1f"><span class="cjx" style="width:38.400px">完成更新</span></span>
  <svg class="x" style="left:401px;top:42.500px" width="4" height="13" viewBox="0 0 4 13"><circle cx="2" cy="2" r="1.200" fill="#1f1f1f"/><circle cx="2" cy="6.500" r="1.200" fill="#1f1f1f"/><circle cx="2" cy="11" r="1.200" fill="#1f1f1f"/></svg>

  <!-- bookmarks bar -->
  <svg class="x" style="left:14.500px;top:73px" width="11" height="11" viewBox="0 0 11 11" fill="none" stroke="#333" stroke-width="1.200"><rect x=".8" y=".8" width="3.600" height="3.600"/><rect x="6.600" y=".8" width="3.600" height="3.600"/><rect x=".8" y="6.600" width="3.600" height="3.600"/><rect x="6.600" y="6.600" width="3.600" height="3.600"/></svg>
  <div class="x" style="left:37px;top:72px;width:1.500px;height:13px;background:#b8e7f2"></div>
  <svg class="x" style="left:49.500px;top:74px" width="12" height="9" viewBox="0 0 12 9"><path d="M0 1.200V9h2.200V3.800z" fill="#4285f4"/><path d="M12 1.200V9H9.800V3.800z" fill="#34a853"/><path d="M0 1.200C0-.2 1.300-.3 2.200.4L6 3.300 9.800.4c.9-.7 2.200-.6 2.200.8L9.800 3.800 6 6.600 2.200 3.800z" fill="#ea4335"/><path d="M9.800 3.800 12 1.200c0-1.400-1.300-1.500-2.200-.8z" fill="#fbbc04"/></svg>
  <span class="x" style="left:66.500px;top:73.500px;font-size:9.800px;color:#333;white-space:nowrap">Gmail</span>
  <svg class="x" style="left:352px;top:73px" width="13" height="11" viewBox="0 0 13 11"><path d="M1 1.800c0-.5.3-.8.800-.8h3.200l1.200 1.400h5c.5 0 .8.300.8.800v6c0 .5-.3.800-.8.800H1.800c-.5 0-.8-.3-.8-.8z" fill="none" stroke="#444" stroke-width="1.200"/></svg>
  <span class="x" style="left:371px;top:74px;font-size:9.400px;color:#333;white-space:nowrap"><span class="cjx" style="width:37.200px">所有書籤</span></span>

  <!-- page -->
  <div class="x" style="left:0;top:95px;width:419px;height:47px;background:#fff;border-bottom:1px solid #f1f1f1"></div>
  <div class="x" style="left:17.500px;top:113.700px;width:14.500px;height:1.600px;background:#2a2a2a;border-radius:1px"></div>
  <div class="x" style="left:17.500px;top:120.700px;width:10.500px;height:1.600px;background:#2a2a2a;border-radius:1px"></div>
  <svg class="x" style="left:386px;top:110px" width="17" height="17" viewBox="0 0 24 24" fill="none" stroke="#2a2a2a" stroke-width="2.100" stroke-linecap="round" stroke-linejoin="round"><path d="M11 4.500H7.500c-2.200 0-3.500 1.300-3.500 3.500v9c0 2.200 1.300 3.500 3.500 3.500h9c2.200 0 3.500-1.300 3.500-3.500V13.500"/><path d="M9.500 14.800l.6-3.100 8.200-8.200c.8-.8 2-.8 2.700 0 .8.700.8 1.900 0 2.700l-8.200 8.200z"/></svg>
  <div class="x" style="left:250px;top:142px;width:143.500px;height:63px;background:#f4f4f4;border-radius:0 0 18px 0"></div>
  <span class="pg" style="left:342px;top:144.500px;font-size:12.500px">S</span>
  <span class="pg" style="left:341.500px;top:163.500px;font-size:12.800px">ule</span>

  <span class="pg" id="t-loi" style="left:25.600px;top:244.800px">Lỗi bạn gặp là:</span>
  <div class="cb" style="top:267.500px"><span class="l">vbnet</span><span class="r">Sao chép mã</span><span class="c" style="color:#3b6fe0">ModuleNotFoundError</span></div>
  <span class="pg" id="t-xay" style="left:25.600px;top:352.700px">xảy ra khi</span>
  <div class="cb" style="top:376px"><span class="l">python</span><span class="r">Sao chép mã</span><span class="c"><span style="color:#a626a4">from</span> Crypto.Cipher</span></div>
  <div class="x" style="left:25.600px;top:480.500px;width:368px;height:1px;background:#f0f0f0"></div>

  <svg class="x" style="left:27px;top:516.500px" width="18" height="17" viewBox="0 0 18 17"><path d="M9 1.200 17 15.500H1z" fill="#ffdd0c" stroke="#2b2b2b" stroke-width="1.300" stroke-linejoin="round"/><path d="M9 6v5" stroke="#2b2b2b" stroke-width="1.700"/><circle cx="9" cy="13.100" r="1" fill="#2b2b2b"/></svg>
  <b class="pg hd" id="t-h1" style="left:51.400px;top:516.600px;font-size:16.500px">Nguyên nhân:</b>
  <span class="pg" id="t-p1" style="left:25.600px;top:548.700px">Bạn đang thiếu thư viện <span class="ic">pycryptodome</span>, vì <span class="ic">Crypto</span> là một phần</span>
  <span class="pg" id="t-p2" style="left:25.600px;top:570.600px">của thư viện đó (không phải thư viện cũ <span class="ic">pycrypto</span> — đã ngừng</span>
  <span class="pg" id="t-p3" style="left:25.600px;top:593.300px">phát triển).</span>
  <div class="x" style="left:25.600px;top:641px;width:368px;height:1px;background:#f0f0f0"></div>

  <svg class="x" style="left:27.500px;top:677px" width="17" height="17" viewBox="0 0 17 17"><rect x=".5" y=".5" width="16" height="16" rx="2" fill="#18c21a" stroke="#0e8f16"/><path d="M4 9l3 3 6-7" fill="none" stroke="#fff" stroke-width="2"/></svg>
  <b class="pg hd" id="t-h2" style="left:51.400px;top:676.800px;font-size:15.900px">Cách khắc phục:</b>
  <div class="rb x" style="left:197px;top:653.500px;width:26px;height:26px;box-shadow:0 0 2px rgba(0,0,0,.05)"></div>
  <svg class="x" style="left:204.500px;top:661px" width="11" height="11" viewBox="0 0 11 11" fill="none" stroke="#1f1f1f" stroke-width="1.300"><path d="M5.500 1v8.500M1.800 6 5.500 9.700 9.200 6"/></svg>

  <!-- scrollbar -->
  <div class="x" style="left:408px;top:143px;width:11px;height:559px;background:#fff"></div>
  <div class="x" style="left:407.500px;top:583.500px;width:11.500px;height:33px;background:#e6e6e6"></div>
  <svg class="x" style="left:410px;top:147px" width="6" height="4" viewBox="0 0 6 4"><path d="M0 4 3 .5 6 4z" fill="#d0d0d0"/></svg>
  <svg class="x" style="left:410px;top:695px" width="6" height="4" viewBox="0 0 6 4"><path d="M0 0 3 3.500 6 0z" fill="#d0d0d0"/></svg>

  <!-- composer -->
  <div class="x" style="left:0;top:700px;width:419px;height:92px;background:#fff"></div>
  <div class="x" style="left:12.400px;top:686px;width:394.200px;height:80.500px;border-radius:22px;background:#fff;border:1px solid #dedede;box-shadow:0 2px 6px rgba(0,0,0,.06)"></div>
  <span class="pg" style="left:28.500px;top:702px;color:#8f8f8f">Hỏi bất kỳ điều gì</span>
  <div class="rb" style="left:22.800px;top:728.800px"></div>
  <div class="rb" style="left:57px;top:728.800px"></div>
  <div class="rb" style="left:91.200px;top:728.800px"></div>
  <div class="rb" style="left:125.700px;top:728.800px"></div>
  <div class="rb" style="left:160.300px;top:728.800px"></div>
  <div class="rb" style="left:194.900px;top:728.800px"></div>
  <div class="rb" style="left:336.300px;top:728.800px"></div>
  <div class="rb" style="left:368.400px;top:728.300px;width:28px;height:28px;background:#000;border-color:#000"></div>
  <svg class="x" style="left:30.800px;top:736.800px" width="11" height="11" viewBox="0 0 11 11"><path d="M5.500 1v9M1 5.500h9" stroke="#3a3a3a" stroke-width="1.200"/></svg>
  <svg class="x" style="left:64.500px;top:736.300px" width="12" height="12" viewBox="0 0 12 12" fill="none" stroke="#3a3a3a" stroke-width="1"><circle cx="6" cy="6" r="5"/><ellipse cx="6" cy="6" rx="2.200" ry="5"/><path d="M1 6h10"/></svg>
  <svg class="x" style="left:99.200px;top:735.800px" width="11" height="13" viewBox="0 0 11 13" fill="none" stroke="#3a3a3a" stroke-width="1.100"><path d="M3.600 9.500C3.600 8 1.500 7.300 1.500 4.800a4 4 0 0 1 8 0c0 2.500-2.100 3.200-2.100 4.700z"/><path d="M3.800 11.300h3.400" stroke-width="1.400"/></svg>
  <svg class="x" style="left:133px;top:736px" width="13" height="13" viewBox="0 0 13 13" fill="none" stroke="#3a3a3a" stroke-width="1.100" stroke-linejoin="round"><path d="M2 6.500 9.500 2.500l1.800 3.300L3.800 9.500z"/><path d="M1.500 7.200l1 1.800M6.500 8.300 4.500 12M6.500 8.300 8.500 12"/><circle cx="6.500" cy="7.800" r="1"/></svg>
  <svg class="x" style="left:167.500px;top:736px" width="13" height="13" viewBox="0 0 13 13" fill="none" stroke="#3a3a3a" stroke-width="1.100" stroke-linecap="round"><path d="M9.500 2.300A5 5 0 1 0 6.500 11.500c1.200 0 1.200-1 .8-1.600-.5-.8.100-1.600 1-1.600h1.500"/><path d="M11.500 2 6.800 6.700"/><circle cx="4" cy="5" r=".6"/><circle cx="3.800" cy="7.800" r=".6"/></svg>
  <svg class="x" style="left:202px;top:741px" width="13" height="3" viewBox="0 0 13 3"><circle cx="2" cy="1.500" r="1" fill="#3a3a3a"/><circle cx="6.500" cy="1.500" r="1" fill="#3a3a3a"/><circle cx="11" cy="1.500" r="1" fill="#3a3a3a"/></svg>
  <svg class="x" style="left:344.300px;top:735.800px" width="11" height="13" viewBox="0 0 11 13" fill="none" stroke="#4a4a4a" stroke-width="1.100"><rect x="3.700" y="1" width="3.600" height="6.500" rx="1.800"/><path d="M1.800 6c0 2.300 1.600 3.700 3.700 3.700S9.200 8.300 9.200 6M5.500 9.700V12M3.500 12h4"/></svg>
  <svg class="x" style="left:375.900px;top:736.300px" width="13" height="12" viewBox="0 0 13 12" stroke="#fff" stroke-width="1.700" stroke-linecap="round"><path d="M1.500 4.800v2.400M4.800 2v8M8.200 3.800v4.400M11.500 5v2"/></svg>
  <span class="x" id="t-foot" style="left:73.300px;top:774px;font-size:9.740px;color:#5d5d5d;white-space:nowrap">ChatGPT có thể mắc lỗi. Hãy kiểm tra các thông tin quan trọng.</span>
</div>

<!-- ======================= PROFILE POPUP ======================= -->
<style>
#pop{left:1168px;top:63.300px;width:257px;height:415.200px;border-radius:11px;background:#f8fdff;box-shadow:0 1px 2px rgba(0,0,0,.22),0 2px 5px 1px rgba(0,0,0,.10);overflow:hidden;color:#1f1f1f}
#pop .x{position:absolute}
#pop .mi{position:absolute;left:35px;font-size:9.300px;white-space:nowrap;color:#1f1f1f}
#pop .cbtn{position:absolute;top:143.200px;width:25.200px;height:25.200px;border-radius:50%;background:#9eeefe}
</style>
<div id="pop" class="abs">
  <div class="x" style="left:0;top:0;width:257px;height:67.200px;background:#9eeefe"></div>
  <div class="x" style="left:0;top:.7px;width:257px;height:414.500px">
  <span class="x" id="t-ppl" style="left:0;width:257px;text-align:center;top:20.500px;font-size:10.200px;color:#1d4a58"><span class="cjx" style="width:20.400px">人員</span> 1</span>
  <div class="x" style="left:101.500px;top:39.500px;width:54px;height:54px;border-radius:50%;background:#fff"></div>
  <svg class="x" style="left:103px;top:41px" width="51" height="51" viewBox="0 0 52 52"><use href="#avatar"/></svg>
  <b class="x" id="t-name" style="left:0;width:257px;text-align:center;top:103.500px;font-size:11.900px;color:#1f1f1f">mừng nguyễn văn</b>
  <span class="x" id="t-mail" style="left:0;width:257px;text-align:center;top:121px;font-size:10.900px;color:#1f1f1f">vanmung1998@gmail.com</span>
  <div class="cbtn" style="left:84.200px"></div>
  <div class="cbtn" style="left:115.500px"></div>
  <div class="cbtn" style="left:146.900px"></div>
  <svg class="x" style="left:90.300px;top:150.300px" width="13" height="11" viewBox="0 0 13 11" fill="none" stroke="#0d2a33" stroke-width="1.300"><circle cx="3.600" cy="5.500" r="2.800"/><circle cx="3.600" cy="5.500" r=".7" fill="#0d2a33"/><path d="M6.400 4.500h5.800v2.600h-1.400v1.500H8.600V7.100H6.400"/></svg>
  <svg class="x" style="left:122px;top:150.800px" width="12" height="10" viewBox="0 0 12 10"><rect x=".7" y=".7" width="10.600" height="8.600" rx="1" fill="none" stroke="#0d2a33" stroke-width="1.400"/><path d="M.7 3.600h10.600" stroke="#0d2a33" stroke-width="1.800"/></svg>
  <svg class="x" style="left:154.500px;top:149.500px" width="10" height="13" viewBox="0 0 10 13"><path d="M5 12C2.300 8.800 1 6.700 1 4.800a4 4 0 0 1 8 0C9 6.700 7.700 8.800 5 12z" fill="none" stroke="#0d2a33" stroke-width="1.300"/><circle cx="5" cy="4.800" r="1.300" fill="#0d2a33"/></svg>

  <svg class="x" style="left:13.500px;top:187px" width="10" height="10" viewBox="0 0 10 10" fill="none" stroke="#333" stroke-width="1.200"><path d="M3.200 1.500C1.200 3 1.200 7 3.200 8.500M6.800 1.500C8.800 3 8.800 7 6.800 8.500"/><path d="M1.500 1.300h2v2M8.500 8.700h-2v-2" stroke-width="1"/></svg>
  <span class="mi" style="top:187.500px"><span class="cjx" style="width:64.82px">同步功能已啟用</span></span>
  <svg class="x" style="left:13.500px;top:211px" width="10" height="10" viewBox="0 0 10 10"><path d="M1 9l.5-2.500L7 1l2 2-5.500 5.500z" fill="#555" stroke="#333" stroke-width="1.100" stroke-linejoin="round"/></svg>
  <span class="mi" style="top:211.500px"><span class="cjx" style="width:37.04px">自訂檔案</span></span>
  <b class="x" style="left:13.800px;top:234.800px;font-size:11.500px;color:#3a3a3a">G</b>
  <span class="mi" style="top:236px"><span class="cjx" style="width:37.04px">管理你的</span> Google <span class="cjx" style="width:18.52px">帳戶</span></span>
  <svg class="x" style="left:14.500px;top:261.500px" width="8" height="8" viewBox="0 0 8 8"><path d="M1 1l6 6M7 1 1 7" stroke="#333" stroke-width="1"/></svg>
  <span class="mi" style="top:261px"><span class="cjx" style="width:64.82px">關閉這個設定檔</span></span>
  <div class="x" style="left:0;top:284px;width:257px;height:1px;background:#b4ecf8"></div>
  <span class="mi" style="left:13px;top:300.500px;font-size:10.200px"><span class="cjx" style="width:20.10px">其他</span> Chrome <span class="cjx" style="width:30.15px">設定檔</span></span>
  <svg class="x" style="left:13px;top:325px" width="14" height="14" viewBox="0 0 14 14" fill="none" stroke="#333" stroke-width="1.200"><circle cx="7" cy="7" r="6"/><circle cx="7" cy="5.600" r="2"/><path d="M3 11.300c1-1.700 2.300-2.300 4-2.300s3 .6 4 2.300"/></svg>
  <span class="mi" style="left:38px;top:327.500px"><span class="cjx" style="width:64.82px">開啟訪客設定檔</span></span>
  <div class="x" style="left:0;top:350.500px;width:257px;height:1px;background:#b4ecf8"></div>
  <svg class="x" style="left:13px;top:365px" width="12" height="10" viewBox="0 0 12 10" fill="none" stroke="#333" stroke-width="1.100"><circle cx="4.500" cy="3" r="1.900"/><path d="M.8 9c.3-2 1.700-2.800 3.700-2.800S7.900 7 8.200 9z"/><path d="M10 1.500v3M8.500 3h3"/></svg>
  <span class="mi" style="top:365.500px"><span class="cjx" style="width:46.30px">新增設定檔</span></span>
  <svg class="x" style="left:13px;top:390.500px" width="12" height="10" viewBox="0 0 12 10" fill="none" stroke="#333" stroke-width="1.100"><circle cx="4.500" cy="3" r="1.900"/><path d="M6 9H.8c.3-2 1.700-2.800 3.700-2.800.6 0 1.100.1 1.500.2"/><circle cx="9.300" cy="7.300" r="1.700"/></svg>
  <span class="mi" style="top:391px"><span class="cjx" style="width:18.52px">管理</span> Chrome <span class="cjx" style="width:27.78px">設定檔</span></span>
</div>
</div>

</body>
</html>
